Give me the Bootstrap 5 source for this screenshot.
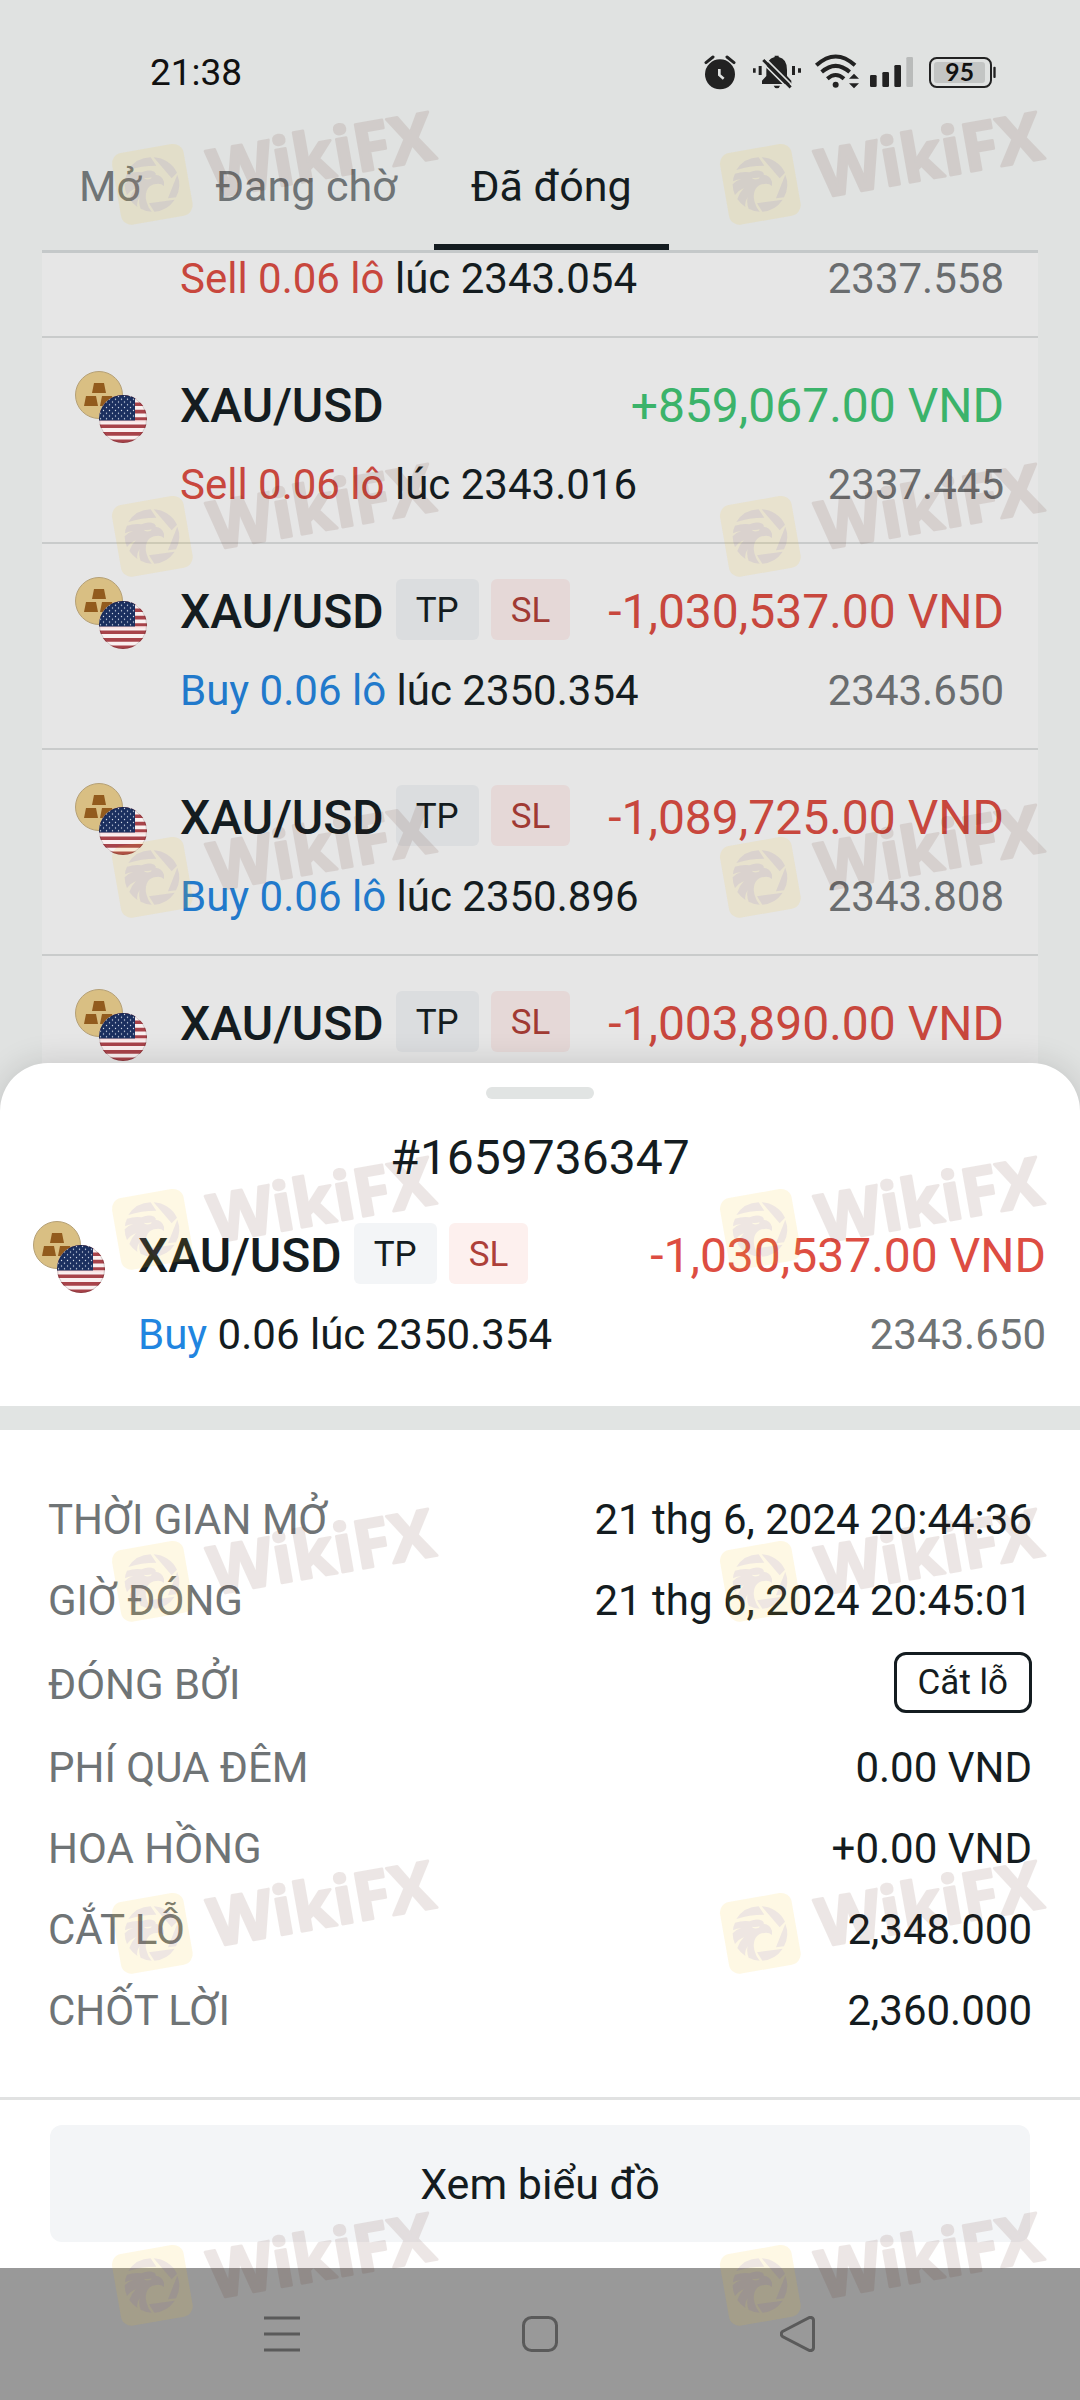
<!DOCTYPE html>
<html lang="vi">
<head>
<meta charset="utf-8">
<meta name="viewport" content="width=device-width, initial-scale=1">
<title>Lệnh đã đóng</title>
<link href="https://cdn.jsdelivr.net/npm/bootstrap@5.3.0/dist/css/bootstrap.min.css" rel="stylesheet">
<style>
  :root { --ink:#141c20; --muted:#6f7476; --fs-xl:48px; --fs-lg:43px; --fs-md:42px; --fs-sm:35px; }
  body { font-family: Roboto, "Noto Sans", sans-serif; color: var(--ink); background: #e0e2e1; }
  .screen { height: 100vh; min-height: 2000px; overflow: hidden; }
  .backdrop-area { flex: 1 1 0; min-height: 0; overflow: hidden; }
  .status-bar { padding: 50px 83px 0 150px; height: 94px; }
  .status-time { font-size: 37px; line-height: 46px; color: #111; }
  .tab-strip { margin: 0 42px; border-bottom: 3px solid #c4c8c9; padding-top: 40px; }
  .tab-strip .nav-link { color: var(--muted); font-size: var(--fs-lg); line-height: 50px; padding: 27px 37px 33px; border: 0; border-bottom: 6px solid transparent; border-radius: 0; background: none; }
  .tab-strip .nav-link.active { color: var(--ink); border-bottom-color: var(--ink); }
  .order-list { margin: 0 42px; background: #e6e6e6; }
  .order-row { padding: 33px 34px 32px 33px; border-bottom: 2px solid #c9cbcb; gap: 33px; }
  .order-row.partial { padding: 1px 34px 32px 138px; }
  .order-body { padding-top: 2px; }
  .pair-icon { width: 72px; height: 72px; flex: none; }
  .head-line { height: 61px; gap: 12px; margin-bottom: 26px; }
  .symbol-name, .amount { font-size: var(--fs-xl); line-height: 66px; white-space: nowrap; }
  .symbol-name { font-weight: 500; }
  .tag { font-size: var(--fs-sm); line-height: 63px; height: 61px; padding: 0 20px; border-radius: 6px; }
  .tag-tp { background: #dbdddf; }
  .tag-sl { background: #e5d8d7; color: #a03a33; }
  .sub-line { font-size: var(--fs-md); line-height: 50px; }
  .order-list .loss, .order-list .sell { color: #c8473d; }
  .order-list .gain { color: #3bb36a; }
  .order-list .buy { color: #2179cb; }
  .order-list .close-price { color: #6a6d6f; }
  .sheet { position: relative; z-index: 2; margin-top: -48px; background: #fff; border-radius: 48px 48px 0 0; box-shadow: 0 0 32px rgba(0,0,0,.14); }
  .grabber { width: 108px; height: 12px; border-radius: 6px; background: #e1e4e3; margin: 24px auto 31px; }
  .ticket { font-size: var(--fs-xl); line-height: 56px; margin: 0; }
  .sheet .order-row { padding: 35px 34px 46px 33px; border: 0; }
  .sheet .tag-tp { background: #f3f5f7; }
  .sheet .tag-sl { background: #fdf0ee; color: #ad4039; }
  .sheet .loss { color: #dd4d42; }
  .sheet .buy { color: #2185e0; }
  .sheet .close-price { color: var(--muted); }
  .divider-band { height: 24px; background: #e1e4e3; }
  .facts { padding: 49px 48px 46px; margin: 0; font-size: var(--fs-md); }
  .fact { line-height: 81px; }
  .fact dt { font-weight: 400; color: var(--muted); }
  .fact dd { margin: 0; }
  .reason { display: block; margin: 11px 0 14px; padding: 0 21px; border: 3px solid var(--ink); border-radius: 12px; font-size: var(--fs-sm); line-height: 55px; }
  .sheet-foot { border-top: 3px solid #e1e2e2; padding: 25px 50px 26px; }
  .chart-btn { background: #f3f5f7; border: 0; border-radius: 12px; font-size: var(--fs-lg); line-height: 50px; padding: 34px 0 33px; color: var(--ink); }
  .system-nav { position: relative; z-index: 2; height: 132px; background: #999; padding: 0 240px; }
  .system-nav button { width: 84px; height: 84px; padding: 24px; border: 0; background: none; line-height: 0; }
  .system-nav svg { width: 36px; height: 36px; fill: none; stroke: #5a5a5a; stroke-width: 3; }
  .stamps { position: absolute; inset: 0; z-index: 5; pointer-events: none; overflow: hidden; padding-top: 100px; }
  .stamps-row { height: 352px; padding-left: 92px; }
  .stamps-row.short { height: 341px; }
  .stamps-row svg { width: 380px; height: 150px; flex: none; margin-right: 228px; }
</style>
</head>
<body>
<svg width="0" height="0" class="position-absolute" aria-hidden="true">
  <defs>
    <clipPath id="flagClip"><circle cx="48" cy="48" r="24"/></clipPath>
    <pattern id="stars" width="6" height="5.6" patternUnits="userSpaceOnUse" patternTransform="translate(24 24)">
      <circle cx="1.5" cy="1.4" r=".7" fill="#e8ecf5"/><circle cx="4.5" cy="4.2" r=".7" fill="#e8ecf5"/>
    </pattern>
    <symbol id="pair" viewBox="0 0 72 72">
      <circle cx="24" cy="24" r="23.5" fill="#d9bf83" stroke="#b5a076"/>
      <g fill="#925b1d"><path d="M19 12h10l2 10H17zM11 25h10l2 10H9zM27 25h10l2 10H25z"/></g>
      <g clip-path="url(#flagClip)">
        <path fill="#faf0f0" d="M24 24h48v48H24z"/>
        <path fill="#a8434a" d="M24 24h48v3.700H24zM24 31.400h48v3.700H24zM24 38.800h48v3.700H24zM24 46.200h48v3.200H24zM24 53.400h48v3.700H24zM24 61h48v3.700H24zM24 68.400h48v3.700H24z"/>
        <path fill="#fae3e3" d="M24 49.500h48v2H24z"/>
        <path fill="#1b2f5f" d="M24 24h36v25.500H24z"/>
        <path fill="url(#stars)" d="M24 24h36v25H24z"/>
      </g>
      <circle cx="48" cy="48" r="23.500" fill="none" stroke="#000" stroke-opacity=".16"/>
    </symbol>
    <symbol id="stamp" viewBox="0 0 1140 450">
      <rect x="72" y="144" width="218" height="218" rx="32" fill="#f5c31e" fill-opacity=".12" transform="rotate(-10 181 253)"/>
      <g transform="translate(45 105)" fill="#4a3cd2" fill-opacity=".09">
        <path d="M64 105A82 82 0 0 1 131 67L148 92Q102 92 64 105z"/>
        <path d="M140 67A82 82 0 0 1 210 113L194 130z"/>
        <path d="M211 119A82 82 0 0 1 207 187L183 190z"/>
        <path d="M203 194A82 82 0 0 1 142 230L126 205z"/>
        <path d="M60 116Q84 108 104 112Q124 102 142 110Q148 116 146 119Q166 121 171 141L171 153Q162 145 148 147Q132 147 122 161Q113 176 118 198Q122 216 134 230Q116 229 101 221Q94 204 98 186Q88 202 91 216Q76 206 67 192Q73 173 87 159Q70 166 60 180Q53 164 53 148Q64 136 78 133Q65 133 54 139Q54 128 60 116zM110 128Q116 137 132 131L134 127Q122 130 110 128z" fill-rule="evenodd"/>
      </g>
      <g opacity=".1">
        <text transform="translate(364 294) rotate(-10)" font-family="Open Sans, Noto Sans, sans-serif" font-weight="700" font-size="200" fill="#52190a" stroke="#52190a" stroke-width="8" stroke-linejoin="round">WikiFX</text>
      </g>
    </symbol>
  </defs>
</svg>

<div class="screen position-relative d-flex flex-column">
  <div class="backdrop-area">
    <header class="status-bar d-flex justify-content-between align-items-start">
      <span class="status-time">21:38</span>
      <svg class="mt-1" width="293" height="36" viewBox="75 42 879 108" role="img" aria-label="Báo thức, im lặng, Wi-Fi, sóng, pin 95%">
        <g fill="#222">
          <circle cx="123" cy="103" r="45"/>
          <path d="M81 68L102 51M165 68L144 51" stroke="#222" stroke-width="9" stroke-linecap="round"/>
          <path d="M121 87v18l13 11" fill="none" stroke="#e0e2e1" stroke-width="8"/>
          <path d="M249 132v-10l13-14V90q0-34 25-39v-4h12v4q25 5 25 39v18l13 14v10zM284 137h19q-2 8-9 8t-10-8z"/>
          <path d="M246 64L328 146" stroke="#e0e2e1" stroke-width="5"/>
          <path d="M253 60L335 142" stroke="#222" stroke-width="9"/>
          <path d="M260 56L342 138" stroke="#e0e2e1" stroke-width="5"/>
          <path d="M222 85h8v13h-8zM239 78h9v27h-9zM339 78h9v27h-9zM357 85h9v13h-9z"/>
          <path d="M412 76Q470 23 528 76M428 96Q470 59 512 96M445 116Q470 94 495 116" fill="none" stroke="#222" stroke-width="12"/>
          <circle cx="470" cy="134" r="9"/>
          <path d="M525 101l15 15h-30zM525 145l15-15h-30z"/>
          <rect x="573" y="105" width="20" height="36" rx="4"/><rect x="610" y="96" width="20" height="45" rx="4"/><rect x="646" y="75" width="20" height="66" rx="4"/>
          <rect x="682" y="51" width="20" height="90" rx="4" fill="#b9bbba"/>
          <rect x="943" y="80" width="7" height="34" rx="3"/>
        </g>
        <rect x="753" y="54" width="183" height="87" rx="20" fill="none" stroke="#222" stroke-width="6"/>
        <rect x="765" y="66" width="153" height="63" rx="9" fill="#c3c5c4"/>
        <text x="842" y="123" text-anchor="middle" font-family="Lato, sans-serif" font-weight="700" font-size="74" fill="#111">95</text>
      </svg>
    </header>

    <ul class="nav tab-strip flex-nowrap" role="tablist">
      <li role="presentation"><button class="nav-link" type="button" role="tab" aria-selected="false">Mở</button></li>
      <li role="presentation"><button class="nav-link" type="button" role="tab" aria-selected="false">Đang chờ</button></li>
      <li role="presentation"><button class="nav-link active" type="button" role="tab" aria-selected="true">Đã đóng</button></li>
    </ul>

    <main class="order-list">
      <article class="order-row partial">
        <div class="sub-line d-flex justify-content-between"><span><span class="sell">Sell 0.06 lô</span> lúc 2343.054</span><span class="close-price">2337.558</span></div>
      </article>
      <article class="order-row d-flex align-items-start">
        <svg class="pair-icon" aria-hidden="true"><use href="#pair"/></svg>
        <div class="order-body flex-grow-1">
          <div class="head-line d-flex"><span class="symbol-name">XAU/USD</span><span class="amount gain ms-auto">+859,067.00 VND</span></div>
          <div class="sub-line d-flex justify-content-between"><span><span class="sell">Sell 0.06 lô</span> lúc 2343.016</span><span class="close-price">2337.445</span></div>
        </div>
      </article>
      <article class="order-row d-flex align-items-start">
        <svg class="pair-icon" aria-hidden="true"><use href="#pair"/></svg>
        <div class="order-body flex-grow-1">
          <div class="head-line d-flex"><span class="symbol-name">XAU/USD</span><span class="tag tag-tp">TP</span><span class="tag tag-sl">SL</span><span class="amount loss ms-auto">-1,030,537.00 VND</span></div>
          <div class="sub-line d-flex justify-content-between"><span><span class="buy">Buy 0.06 lô</span> lúc 2350.354</span><span class="close-price">2343.650</span></div>
        </div>
      </article>
      <article class="order-row d-flex align-items-start">
        <svg class="pair-icon" aria-hidden="true"><use href="#pair"/></svg>
        <div class="order-body flex-grow-1">
          <div class="head-line d-flex"><span class="symbol-name">XAU/USD</span><span class="tag tag-tp">TP</span><span class="tag tag-sl">SL</span><span class="amount loss ms-auto">-1,089,725.00 VND</span></div>
          <div class="sub-line d-flex justify-content-between"><span><span class="buy">Buy 0.06 lô</span> lúc 2350.896</span><span class="close-price">2343.808</span></div>
        </div>
      </article>
      <article class="order-row d-flex align-items-start">
        <svg class="pair-icon" aria-hidden="true"><use href="#pair"/></svg>
        <div class="order-body flex-grow-1">
          <div class="head-line d-flex"><span class="symbol-name">XAU/USD</span><span class="tag tag-tp">TP</span><span class="tag tag-sl">SL</span><span class="amount loss ms-auto">-1,003,890.00 VND</span></div>
        </div>
      </article>
    </main>
  </div>

  <section class="sheet" aria-label="Chi tiết lệnh">
    <div class="d-flex"><div class="grabber"></div></div>
    <h1 class="ticket text-center fw-normal">#1659736347</h1>
    <div class="order-row d-flex align-items-start">
      <svg class="pair-icon" aria-hidden="true"><use href="#pair"/></svg>
      <div class="order-body flex-grow-1">
        <div class="head-line d-flex"><span class="symbol-name">XAU/USD</span><span class="tag tag-tp">TP</span><span class="tag tag-sl">SL</span><span class="amount loss ms-auto">-1,030,537.00 VND</span></div>
        <div class="sub-line d-flex justify-content-between"><span><span class="buy">Buy</span> 0.06 lúc 2350.354</span><span class="close-price">2343.650</span></div>
      </div>
    </div>
    <div class="divider-band"></div>
    <dl class="facts">
      <div class="fact d-flex justify-content-between"><dt>THỜI GIAN MỞ</dt><dd>21 thg 6, 2024 20:44:36</dd></div>
      <div class="fact d-flex justify-content-between"><dt>GIỜ ĐÓNG</dt><dd>21 thg 6, 2024 20:45:01</dd></div>
      <div class="fact d-flex justify-content-between align-items-center"><dt>ĐÓNG BỞI</dt><dd><span class="reason">Cắt lỗ</span></dd></div>
      <div class="fact d-flex justify-content-between"><dt>PHÍ QUA ĐÊM</dt><dd>0.00 VND</dd></div>
      <div class="fact d-flex justify-content-between"><dt>HOA HỒNG</dt><dd>+0.00 VND</dd></div>
      <div class="fact d-flex justify-content-between"><dt>CẮT LỖ</dt><dd>2,348.000</dd></div>
      <div class="fact d-flex justify-content-between"><dt>CHỐT LỜI</dt><dd>2,360.000</dd></div>
    </dl>
    <div class="sheet-foot"><button class="btn chart-btn w-100" type="button">Xem biểu đồ</button></div>
  </section>

  <nav class="system-nav d-flex justify-content-between align-items-center" aria-label="Điều hướng hệ thống">
    <button type="button" aria-label="Gần đây"><svg viewBox="0 0 36 36"><path d="M0 2h36M0 18h36M0 34h36"/></svg></button>
    <button type="button" aria-label="Trang chủ"><svg viewBox="0 0 36 36"><rect x="1.500" y="1.500" width="33" height="33" rx="8"/></svg></button>
    <button type="button" aria-label="Quay lại"><svg viewBox="0 0 36 36"><path d="M2.500 15.500L29.500 1.500Q33 1 33.500 4V32Q33 35 29.500 34.500L2.500 20.500Q0 18 2.500 15.500z"/></svg></button>
  </nav>

  <div class="stamps" aria-hidden="true">
    <div class="stamps-row d-flex"><svg><use href="#stamp"/></svg><svg><use href="#stamp"/></svg></div>
    <div class="stamps-row short d-flex"><svg><use href="#stamp"/></svg><svg><use href="#stamp"/></svg></div>
    <div class="stamps-row d-flex"><svg><use href="#stamp"/></svg><svg><use href="#stamp"/></svg></div>
    <div class="stamps-row d-flex"><svg><use href="#stamp"/></svg><svg><use href="#stamp"/></svg></div>
    <div class="stamps-row d-flex"><svg><use href="#stamp"/></svg><svg><use href="#stamp"/></svg></div>
    <div class="stamps-row d-flex"><svg><use href="#stamp"/></svg><svg><use href="#stamp"/></svg></div>
    <div class="stamps-row d-flex"><svg><use href="#stamp"/></svg><svg><use href="#stamp"/></svg></div>
  </div>
</div>
<script src="https://cdn.jsdelivr.net/npm/bootstrap@5.3.0/dist/js/bootstrap.bundle.min.js"></script>
</body>
</html>
